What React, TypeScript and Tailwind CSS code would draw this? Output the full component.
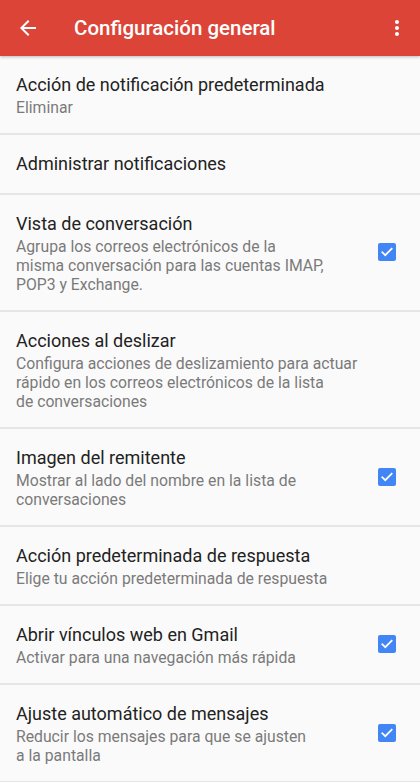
import React from "react";

type Row = { title: string; lines?: string[]; checked?: boolean };

const rows: Row[] = [
  { title: "Acción de notificación predeterminada", lines: ["Eliminar"] },
  { title: "Administrar notificaciones" },
  {
    title: "Vista de conversación",
    lines: [
      "Agrupa los correos electrónicos de la",
      "misma conversación para las cuentas IMAP,",
      "POP3 y Exchange.",
    ],
    checked: true,
  },
  {
    title: "Acciones al deslizar",
    lines: [
      "Configura acciones de deslizamiento para actuar",
      "rápido en los correos electrónicos de la lista",
      "de conversaciones",
    ],
  },
  {
    title: "Imagen del remitente",
    lines: ["Mostrar al lado del nombre en la lista de", "conversaciones"],
    checked: true,
  },
  {
    title: "Acción predeterminada de respuesta",
    lines: ["Elige tu acción predeterminada de respuesta"],
  },
  {
    title: "Abrir vínculos web en Gmail",
    lines: ["Activar para una navegación más rápida"],
    checked: true,
  },
  {
    title: "Ajuste automático de mensajes",
    lines: ["Reducir los mensajes para que se ajusten", "a la pantalla"],
    checked: true,
  },
];

function Checkbox() {
  return (
    <div className="w-[18px] h-[18px] rounded-[2px] bg-[#4285f4] flex items-center justify-center shrink-0">
      <svg width="14" height="14" viewBox="0 0 24 24">
        <path d="M4 12.5l5 5L20 6.5" fill="none" stroke="#ffffff" strokeWidth="3" strokeLinecap="square" />
      </svg>
    </div>
  );
}

export default function App() {
  return (
    <div
      className="w-[420px] h-[782px] overflow-hidden bg-[#fafafa]"
      style={{ fontFamily: "Roboto, 'Noto Sans', sans-serif" }}
    >
      <div className="h-[56px] bg-[#db4437] flex items-center px-4 shadow-[0_1px_3px_rgba(0,0,0,0.25)] relative z-10">
        <svg width="24" height="24" viewBox="0 0 24 24" fill="#ffffff">
          <path d="M20 11H7.83l5.59-5.59L12 4l-8 8 8 8 1.41-1.41L7.83 13H20v-2z" />
        </svg>
        <div className="ml-[34px] text-white text-[20.5px] font-medium flex-1">Configuración general</div>
        <svg width="24" height="24" viewBox="0 0 24 24" fill="#ffffff" className="-mr-[5px]">
          <path d="M12 8c1.1 0 2-.9 2-2s-.9-2-2-2-2 .9-2 2 .9 2 2 2zm0 2c-1.1 0-2 .9-2 2s.9 2 2 2 2-.9 2-2-.9-2-2-2zm0 6c-1.1 0-2 .9-2 2s.9 2 2 2 2-.9 2-2-.9-2-2-2z" />
        </svg>
      </div>
      <div className="flex flex-col">
        {rows.map((r, i) => (
          <div key={i} className="flex items-center pl-4 pr-[24px] pt-[15px] pb-[16px] border-b-2 border-[#e6e6e6]">
            <div className="flex-1 min-w-0">
              <div className="text-[18px] leading-[27px] text-[#222222] whitespace-nowrap">{r.title}</div>
              {r.lines?.map((l, j) => (
                <div key={j} className="text-[15.75px] leading-[19px] text-[#7a7a7a] whitespace-nowrap">
                  {l}
                </div>
              ))}
            </div>
            {r.checked && <Checkbox />}
          </div>
        ))}
      </div>
    </div>
  );
}
